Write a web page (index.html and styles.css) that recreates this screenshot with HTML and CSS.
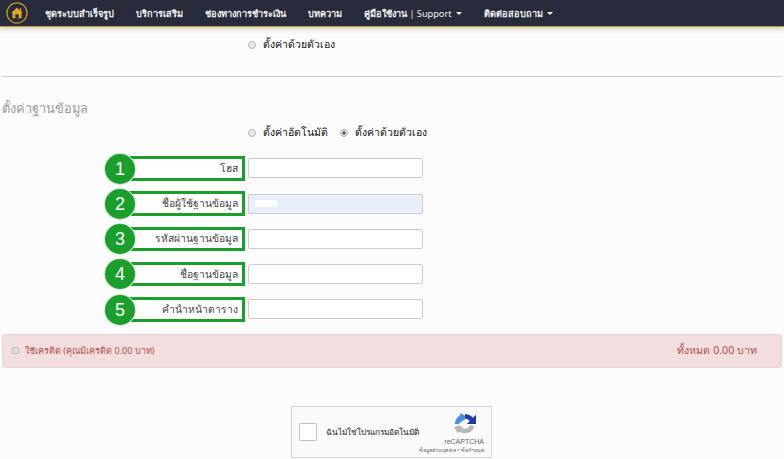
FILE: index.html
```html
<!DOCTYPE html>
<html lang="th">
<head>
<meta charset="utf-8">
<title>ตั้งค่าฐานข้อมูล</title>
<link rel="stylesheet" href="styles.css">
</head>
<body>
<nav class="nav">
  <span class="logo">
    <svg width="34" height="34" viewBox="0 0 34 34"><circle cx="17" cy="17" r="15.5" fill="#272b3b" stroke="#c8961e" stroke-width="2"/><path d="M17 8.5 L26 17 L24 17 L24 25 L10 25 L10 17 L8 17 Z" fill="#e0a526"/><rect x="14.5" y="19" width="5" height="6" fill="#272b3b"/><rect x="21.5" y="9.5" width="2" height="4.5" fill="#e0a526"/></svg>
  </span>
  <a class="item">ชุดระบบสำเร็จรูป</a>
  <a class="item">บริการเสริม</a>
  <a class="item">ช่องทางการชำระเงิน</a>
  <a class="item">บทความ</a>
  <a class="item">คู่มือใช้งาน <span class="latin">| Support</span> <i class="caret"></i></a>
  <a class="item">ติดต่อสอบถาม <i class="caret"></i></a>
</nav>
<main>
  <div class="radio-row first">
    <label class="radio"><i class="dot"></i>ตั้งค่าด้วยตัวเอง</label>
  </div>
  <hr class="rule">
  <h4 class="title">ตั้งค่าฐานข้อมูล</h4>
  <div class="radio-row second">
    <label class="radio"><i class="dot"></i>ตั้งค่าอัตโนมัติ</label>
    <label class="radio"><i class="dot on"></i>ตั้งค่าด้วยตัวเอง</label>
  </div>
  <form class="fields">
    <div class="field"><div class="label"><b class="num">1</b>โฮส</div><input class="input"></div>
    <div class="field"><div class="label"><b class="num">2</b>ชื่อผู้ใช้ฐานข้อมูล</div><div class="input filled"><span class="mask"></span></div></div>
    <div class="field"><div class="label"><b class="num">3</b>รหัสผ่านฐานข้อมูล</div><input class="input"></div>
    <div class="field"><div class="label"><b class="num">4</b>ชื่อฐานข้อมูล</div><input class="input"></div>
    <div class="field"><div class="label"><b class="num">5</b>คำนำหน้าตาราง</div><input class="input"></div>
  </form>
  <div class="alert">
    <label class="credit"><i class="check"></i>ใช้เครดิต (คุณมีเครดิต 0.00 บาท)</label>
    <span class="total">ทั้งหมด 0.00 บาท</span>
  </div>
  <div class="captcha">
    <i class="cbox"></i>
    <span class="ctext">ฉันไม่ใช่โปรแกรมอัตโนมัติ</span>
    <div class="cbrand">
      <svg class="clogo" width="22" height="22" viewBox="0 0 24 24" fill="none" stroke-width="5"><path d="M4 14 A8.5 8.5 0 0 0 20 14" stroke="#b8b8b8"/><path d="M0 15 L10 15 L4 22 Z" fill="#b8b8b8"/><path d="M3.5 12 A8.5 8.5 0 0 1 10 3.7" stroke="#4a90e2"/><path d="M7 0 L15 5 L6 11 Z" fill="#4a90e2"/><path d="M12 3.5 A8.5 8.5 0 0 1 20.5 12" stroke="#1c3aa9"/><path d="M14 12 L24 12 L24 2 Z" fill="#1c3aa9"/></svg>
      <span class="cname">reCAPTCHA</span>
      <span class="clinks">ข้อมูลส่วนบุคคล • ข้อกำหนด</span>
    </div>
  </div>
</main>
</body>
</html>
```
FILE: styles.css
```css
* { box-sizing: border-box; }
html, body { margin: 0; height: 459px; overflow: hidden; }
body { background: #fcfcfc; font-family: "Noto Sans", "Open Sans", "Liberation Sans", sans-serif; color: #333; font-size: 12px; }
.nav { height: 27px; background: #272b3b; border-bottom: 1px solid #c8961e; box-shadow: 0 2px 5px rgba(0,0,0,.2); display: flex; align-items: center; padding-left: 6px; color: #f2f2f2; font-size: 9.2px; font-weight: 700; white-space: nowrap; }
.logo { width: 22px; height: 22px; display: flex; align-items: center; justify-content: center; margin-right: 17px; }
.logo svg { width: 22px; height: 22px; }
.item { margin-right: 22px; }
.latin { font-weight: 400; font-size: 9.2px; }
.caret { display: inline-block; border: 3px solid transparent; border-top-color: #f2f2f2; border-bottom: 0; vertical-align: middle; margin-left: 2px; }
main { display: block; }
.radio-row { display: flex; padding-left: 248px; gap: 12px; height: 17px; align-items: center; }
.radio-row.first { margin-top: 9px; }
.radio { display: flex; align-items: center; font-size: 10.5px; color: #111; white-space: nowrap; }
.dot { width: 8px; height: 8px; border-radius: 50%; border: 1px solid #b4b4b4; background: #e8e8e8; margin-right: 7px; flex: none; }
.dot.on { background: radial-gradient(circle, #666 0 1.5px, #eee 2px); }
.rule { margin: 23px 2px 0; border: 0; border-top: 1px solid #ccc; }
.title { margin: 21px 0 0 2px; font-size: 12.8px; line-height: 20px; font-weight: 400; color: #9a9a9a; }
.radio-row.second { margin-top: 6px; }
.fields { margin-top: 15px; padding-left: 127px; display: flex; flex-direction: column; gap: 10.75px; }
.field { display: flex; align-items: center; height: 24.5px; gap: 3px; }
.label { position: relative; width: 118px; height: 24.5px; border: 3px solid #1a9f2d; background: #fff; display: flex; align-items: center; justify-content: flex-end; padding-right: 4px; font-size: 10.3px; color: #444; white-space: nowrap; }
.num { position: absolute; left: -25px; top: -5.5px; width: 30px; height: 30px; border-radius: 50%; background: #1a9f2d; box-shadow: 0 0 0 1px #d5e8d5; color: #fff; font: 400 18px/30px "Liberation Sans", sans-serif; text-align: center; }
.input { display: block; width: 175px; height: 20px; padding: 0; background: #fff; border: 1px solid #ccc; border-radius: 2px; }
.filled { background: #e8effb; display: flex; align-items: center; padding-left: 6px; }
.mask { width: 22px; height: 7px; background: #fff; }
.alert { margin: 12px 2px 0; height: 34px; background: #f2dede; border: 1px solid #ebd5d8; border-radius: 3px; display: flex; align-items: center; justify-content: space-between; padding: 0 24px 0 9px; color: #b0504e; }
.credit { display: flex; align-items: center; font-size: 9.1px; }
.check { width: 7px; height: 7px; background: #ddd; border: 1px solid #bbb; border-radius: 1px; margin-right: 6px; }
.total { font-size: 10.6px; }
.captcha { margin: 38px 0 0 291px; width: 201px; height: 52px; background: #fafafa; border: 1px solid #d6d6d6; display: flex; align-items: center; padding-left: 7px; position: relative; }
.cbox { width: 18px; height: 18px; background: #fff; border: 1px solid #c1c1c1; border-radius: 2px; margin-right: 9px; flex: none; }
.ctext { font-size: 8.3px; color: #222; white-space: nowrap; }
.cbrand { position: absolute; right: 7px; top: 6px; display: flex; flex-direction: column; align-items: flex-end; color: #666; }
.clogo { margin-right: 8px; }
.cname { font: 7px/9px "Liberation Sans", sans-serif; margin-top: 2px; }
.clinks { font-size: 5.3px; line-height: 8px; white-space: nowrap; }
```
